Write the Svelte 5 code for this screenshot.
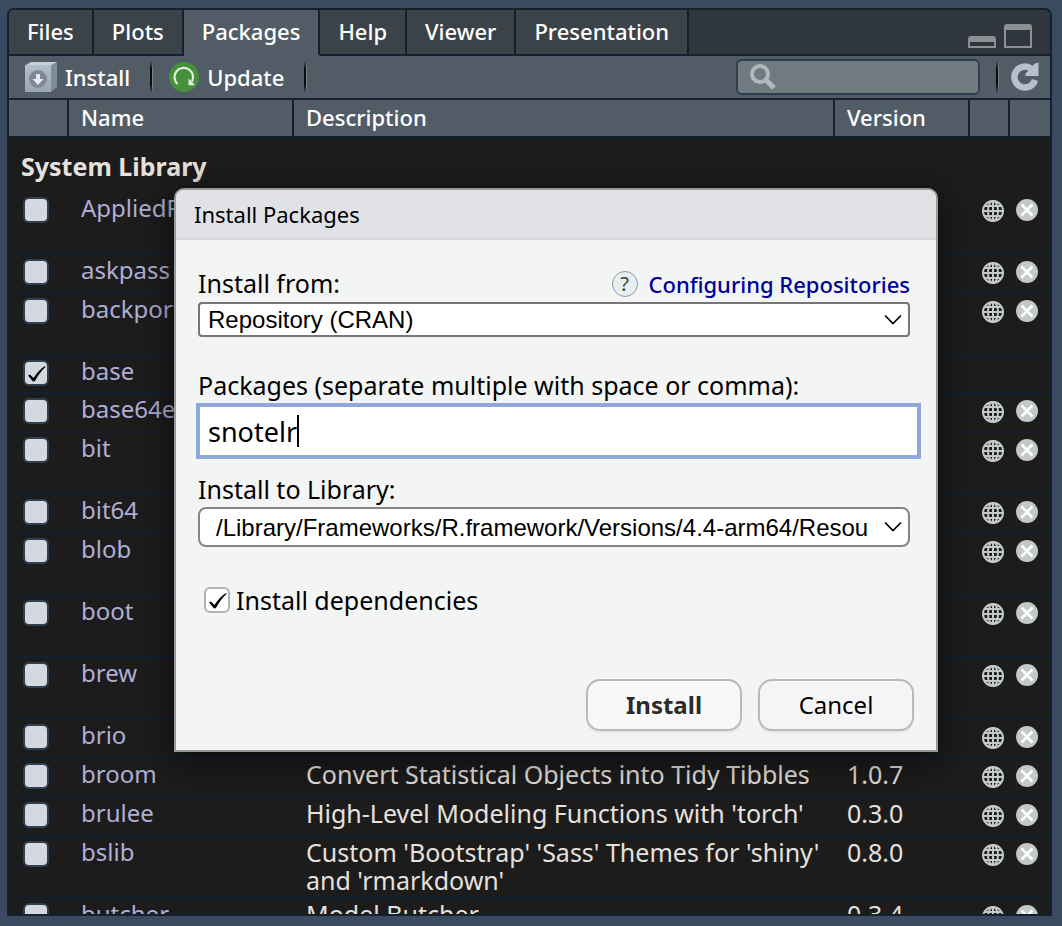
<script>
  const tabs = ['Files', 'Plots', 'Packages', 'Help', 'Viewer', 'Presentation'];
  const active = 'Packages';

  const packages = [
    { name: 'AppliedPredictive', tall: true },
    { name: 'askpass' },
    { name: 'backports', tall: true },
    { name: 'base', loaded: true, core: true },
    { name: 'base64enc' },
    { name: 'bit', tall: true },
    { name: 'bit64' },
    { name: 'blob', tall: true },
    { name: 'boot', tall: true },
    { name: 'brew', tall: true },
    { name: 'brio' },
    { name: 'broom', description: 'Convert Statistical Objects into Tidy Tibbles', version: '1.0.7' },
    { name: 'brulee', description: "High-Level Modeling Functions with 'torch'", version: '0.3.0' },
    { name: 'bslib', tall: true, description: "Custom 'Bootstrap' 'Sass' Themes for 'shiny' and 'rmarkdown'", version: '0.8.0' },
    { name: 'butcher', tall: true, description: 'Model Butcher', version: '0.3.4' }
  ];

  let packageNames = $state('snotelr');
</script>

<main class="window">
  <section class="pane">
    <nav class="tabs">
      {#each tabs as tab}
        <button class="tab" class:active={tab === active}>{tab}</button>
      {/each}
      <div class="pane-controls">
        <button class="icon-button" aria-label="Minimize">
          <svg width="28" height="12" viewBox="0 0 28 12">
            <path fill="#8b9092" fill-rule="evenodd" d="M3 0H25Q28 0 28 3V12H0V3Q0 0 3 0ZM2 6V10H26V6Z" />
          </svg>
        </button>
        <button class="icon-button" aria-label="Maximize">
          <svg width="28" height="24" viewBox="0 0 28 24">
            <path fill="#8b9092" fill-rule="evenodd" d="M3 0H25Q28 0 28 3V24H0V3Q0 0 3 0ZM2 6V22H26V6Z" />
          </svg>
        </button>
      </div>
    </nav>

    <div class="toolbar">
      <button class="tool">
        <svg width="32" height="30" viewBox="0 0 32 30">
          <defs>
            <linearGradient id="front" x1="0" y1="0" x2="0" y2="1">
              <stop offset="0" stop-color="#b3becb" /><stop offset="1" stop-color="#98a5b3" />
            </linearGradient>
          </defs>
          <path d="M0 3.500L6 0H32L26 3.500Z" fill="#c6d2d8" />
          <path d="M26 3.500L32 0V25L26 30Z" fill="#7d8c9c" />
          <rect y="3" width="26" height="27" fill="url(#front)" />
          <circle cx="13" cy="17" r="9" fill="#7c8895" />
          <path d="M11 12H15V17H18.500L13 23L7.500 17H11Z" fill="#e6ebef" />
        </svg>
        <span>Install</span>
      </button>
      <span class="divider"></span>
      <button class="tool update">
        <svg width="30" height="30" viewBox="0 0 30 30">
          <circle cx="15" cy="15" r="15" fill="#46903a" />
          <path d="M8.500 22A9.300 9.300 0 1 1 23 19.500" fill="none" stroke="#e4eee2" stroke-width="2.200" />
          <path d="M19.500 16.500L25.500 22.500V23.200H19.500Z" fill="#e4eee2" />
        </svg>
        <span>Update</span>
      </button>
      <span class="divider"></span>
      <div class="search">
        <svg width="28" height="28" viewBox="0 0 28 28" fill="none" stroke="#b3b8bc">
          <circle cx="11" cy="11" r="8" stroke-width="4" />
          <path d="M17 17L25 25" stroke-width="5" />
        </svg>
        <input type="text" aria-label="Search packages" />
      </div>
      <span class="divider"></span>
      <button class="icon-button refresh" aria-label="Refresh">
        <svg width="28" height="30" viewBox="0 0 28 30">
          <path d="M24 18A10.500 10.500 0 1 1 20 6.500" fill="none" stroke="#b9bfcb" stroke-width="6.500" />
          <path d="M27.500 0.500V14H14.500V11.500L24 1.500Z" fill="#b9bfcb" />
        </svg>
      </button>
    </div>

    <div class="list">
      <table>
        <colgroup>
          <col class="c-check" /><col class="c-name" /><col /><col class="c-version" /><col class="c-icon" /><col class="c-icon" />
        </colgroup>
        <thead>
          <tr><th></th><th>Name</th><th>Description</th><th>Version</th><th></th><th></th></tr>
        </thead>
        <tbody>
          <tr class="group"><th colspan="6">System Library</th></tr>
          {#each packages as pkg}
            <tr class:tall={pkg.tall} class:core={pkg.core}>
              <td class="check"><input type="checkbox" aria-label={pkg.name} checked={pkg.loaded} /></td>
              <td class="name"><a href="#{pkg.name}">{pkg.name}</a></td>
              <td>{pkg.description ?? ''}</td>
              <td>{pkg.version ?? ''}</td>
              <td class="globe">
                {#if !pkg.core}
                  <button class="icon-button" aria-label="Browse {pkg.name}">
                    <svg width="22" height="22" viewBox="0 0 22 22" fill="none" stroke="#c3c8ca" stroke-width="2">
                      <circle cx="11" cy="11" r="10" />
                      <ellipse cx="11" cy="11" rx="5" ry="10" />
                      <path d="M11 1V21M1 11H21M3 6H19M3 16H19" />
                    </svg>
                  </button>
                {/if}
              </td>
              <td class="remove">
                {#if !pkg.core}
                  <button class="icon-button" aria-label="Remove {pkg.name}">
                    <svg width="22" height="22" viewBox="0 0 22 22">
                      <circle cx="11" cy="11" r="11" fill="#c3c8ca" />
                      <path d="M5.500 5.500L16.500 16.500M16.500 5.500L5.500 16.500" stroke="#fff" stroke-width="2.500" />
                    </svg>
                  </button>
                {/if}
              </td>
            </tr>
          {/each}
        </tbody>
      </table>
    </div>
  </section>

  <div class="dialog" role="dialog" aria-labelledby="dialog-title">
    <h1 id="dialog-title">Install Packages</h1>
    <form onsubmit={(e) => e.preventDefault()}>
      <div class="label-row">
        <label for="source">Install from:</label>
        <a class="help" href="#repositories">
          <span class="help-mark">?</span>
          <span>Configuring Repositories</span>
        </a>
      </div>
      <select id="source" class="source"><option>Repository (CRAN)</option></select>

      <label class="field-label" for="packages">Packages (separate multiple with space or comma):</label>
      <div class="entry">
        <input id="packages" type="text" bind:value={packageNames} />
        <span class="caret"></span>
      </div>

      <label class="field-label library-label" for="library">Install to Library:</label>
      <select id="library" class="library"><option>/Library/Frameworks/R.framework/Versions/4.4-arm64/Resou</option></select>

      <label class="dependencies"><input type="checkbox" checked /><span>Install dependencies</span></label>

      <div class="actions">
        <button class="primary" type="submit">Install</button>
        <button type="button">Cancel</button>
      </div>
    </form>
  </div>
</main>

<style>
  :global(body) {
    margin: 0;
  }
  * {
    box-sizing: border-box;
  }
  .window {
    position: relative;
    display: flex;
    height: 100vh;
    padding: 8px 10px 10px 7px;
    overflow: hidden;
    background: #3a4b61;
    color: #fff;
    font-family: 'Noto Sans', sans-serif;
    font-size: 25px;
    line-height: 28px;
  }
  button,
  input {
    margin: 0;
    font: inherit;
    color: inherit;
  }
  svg {
    display: block;
    flex: none;
  }
  .pane {
    flex: 1;
    min-width: 0;
    display: flex;
    flex-direction: column;
    border: 2px solid #14202e;
    border-radius: 7px 7px 0 0;
    background: #1c1c1c;
    overflow: hidden;
  }
  .icon-button {
    display: block;
    padding: 0;
    border: 0;
    background: none;
  }

  .tabs {
    display: flex;
    flex: none;
    height: 46px;
    background: linear-gradient(#14202e, #14202e) bottom / 100% 2px no-repeat #30363d;
  }
  .tab {
    height: 46px;
    padding: 0 18px 2px;
    border: 0;
    border-right: 2px solid #14202e;
    border-bottom: 2px solid #14202e;
    background: #3b4349;
    font-size: 22px;
    font-weight: 500;
  }
  .tab.active {
    border-bottom-color: #525c66;
    background: #525c66;
  }
  .pane-controls {
    display: flex;
    align-items: flex-end;
    gap: 8px;
    margin-left: auto;
    padding: 0 18px 8px 0;
  }

  .toolbar {
    display: flex;
    flex: none;
    align-items: center;
    height: 44px;
    padding: 0 11px 0 16px;
    border-bottom: 2px solid #14202e;
    background: #525c66;
  }
  .tool {
    display: flex;
    align-items: center;
    gap: 8px;
    padding: 0 20px 0 0;
    border: 0;
    background: none;
    font-size: 22px;
    font-weight: 500;
  }
  .tool.update {
    padding-left: 16px;
  }
  .divider {
    flex: none;
    width: 3px;
    height: 32px;
    background: linear-gradient(90deg, #0a0c0e 66%, #78828b 66%);
    mask-image: linear-gradient(transparent, #000 25%, #000 75%, transparent);
  }
  .search {
    display: flex;
    align-items: center;
    width: 244px;
    height: 36px;
    margin: 0 16px 0 auto;
    padding-left: 11px;
    border: 2px solid #303f4d;
    border-radius: 6px;
    background: #6f7a81;
  }
  .search input {
    flex: 1;
    min-width: 0;
    border: 0;
    outline: 0;
    background: none;
  }
  .refresh {
    margin-left: 12px;
  }

  .list {
    flex: 1;
    min-height: 0;
    overflow: hidden;
  }
  table {
    width: 100%;
    table-layout: fixed;
    border-collapse: separate;
    border-spacing: 0;
    color: #e6e1dc;
  }
  .c-check {
    width: 60px;
  }
  .c-name {
    width: 225px;
  }
  .c-version {
    width: 135px;
  }
  .c-icon {
    width: 40px;
  }
  thead th {
    height: 38px;
    padding: 0 12px 2px;
    border-right: 2px solid #14202e;
    border-bottom: 2px solid #14202e;
    background: #525c66;
    color: #fff;
    font-size: 22px;
    font-weight: 500;
    text-align: left;
  }
  thead th:last-child {
    border-right: 0;
  }
  .group th {
    height: 53px;
    padding: 2px 12px 0;
    font-weight: 700;
    text-align: left;
  }
  td {
    height: 39px;
    padding: 1px 0 0 12px;
    border-top: 2px solid #14202e;
    vertical-align: top;
  }
  .tall td {
    height: 62px;
  }
  .core td {
    height: 38px;
  }
  .group + tr td {
    border-top-color: transparent;
  }
  td.check {
    padding: 4px 0 0 14px;
  }
  td.globe {
    padding: 7px 0 0 12px;
  }
  td.remove {
    padding: 6px 0 0 6px;
  }
  .name a {
    display: block;
    overflow: hidden;
    color: #b0aed4;
    font-size: 24px;
    text-decoration: none;
    white-space: nowrap;
  }
  input[type='checkbox'] {
    appearance: none;
    display: block;
    flex: none;
    width: 26px;
    height: 26px;
    border: 2px solid #2f4050;
    border-radius: 6px;
    background: #d5d9df;
  }
  input[type='checkbox']:checked {
    background-image: url("data:image/svg+xml,%3Csvg xmlns='http://www.w3.org/2000/svg' viewBox='0 0 22 22'%3E%3Cpath d='M3 13.500L5 12.500L8.500 16C12 10.500 15.500 6.500 20 4L20.500 5C16 9 13 13.500 10 19L8 19.500Z' fill='%23000'/%3E%3C/svg%3E");
  }

  .dialog {
    position: absolute;
    top: 188px;
    left: 174px;
    right: 124px;
    border: 2px solid #999;
    border-radius: 10px 10px 0 0;
    background: #f3f5f4;
    color: #000;
    box-shadow: 0 8px 36px rgba(0, 0, 0, 0.6);
  }
  h1 {
    height: 50px;
    margin: 0;
    padding: 10px 18px;
    border-bottom: 2px solid #d8d9dc;
    border-radius: 8px 8px 0 0;
    background: #e1e2e6;
    font-size: 22px;
    font-weight: 400;
  }
  form {
    display: flex;
    flex-direction: column;
    padding: 28px 26px 19px 22px;
  }
  .label-row {
    display: flex;
    align-items: center;
    justify-content: space-between;
    height: 30px;
    margin-bottom: 4px;
  }
  .help {
    display: flex;
    align-items: center;
    gap: 11px;
    padding-top: 2px;
    color: #00009c;
    font-size: 22px;
    font-weight: 500;
    text-decoration: none;
  }
  .help-mark {
    width: 26px;
    height: 26px;
    border: 1px solid #8c9ba5;
    border-radius: 50%;
    background: #e9eef1;
    color: #333d47;
    font-size: 20px;
    font-weight: 400;
    line-height: 24px;
    text-align: center;
  }
  select {
    appearance: none;
    width: 100%;
    margin: 0;
    border: 2px solid #767676;
    background: url("data:image/svg+xml,%3Csvg xmlns='http://www.w3.org/2000/svg' width='18' height='12' fill='none' stroke='%23000' stroke-width='1.700'%3E%3Cpath d='M1 1.500L9 9.500L17 1.500'/%3E%3C/svg%3E") right 6px center no-repeat #fff;
    color: #000;
    font-family: 'Liberation Sans', Arial, sans-serif;
    font-size: 24px;
  }
  .source {
    height: 35px;
    padding: 0 32px 0 8px;
    border-radius: 4px;
  }
  .library {
    height: 40px;
    padding: 0 32px 0 16px;
    border-color: #858585;
    border-radius: 8px;
  }
  .field-label {
    margin: 33px 0 3px;
    line-height: 30px;
  }
  .library-label {
    margin-top: 15px;
  }
  .entry {
    position: relative;
    margin: 0 -11px 0 -2px;
  }
  .entry input {
    display: block;
    width: 100%;
    height: 56px;
    padding: 0 8px;
    border: 4px solid #8fa8d9;
    outline: 0;
    background: #fff;
    font-size: 27px;
  }
  .caret {
    position: absolute;
    top: 12px;
    left: 101px;
    width: 2px;
    height: 32px;
    background: #000;
  }
  .dependencies {
    display: flex;
    align-items: center;
    gap: 6px;
    align-self: flex-start;
    height: 26px;
    margin: 40px 0 66px 6px;
  }
  .dependencies input[type='checkbox'] {
    border-color: #b3b3b3;
    background-color: #fff;
  }
  .actions {
    display: flex;
    justify-content: flex-end;
    gap: 16px;
    margin-right: -4px;
  }
  .actions button {
    width: 156px;
    height: 52px;
    padding: 0;
    border: 2px solid #bababa;
    border-radius: 14px;
    background: #f5f5f8;
    box-shadow: 0 2px 2px rgba(0, 0, 0, 0.06);
    font-size: 24px;
  }
  .actions .primary {
    background: #f8f8f8;
    color: #2b2b2b;
    font-weight: 700;
  }
</style>
